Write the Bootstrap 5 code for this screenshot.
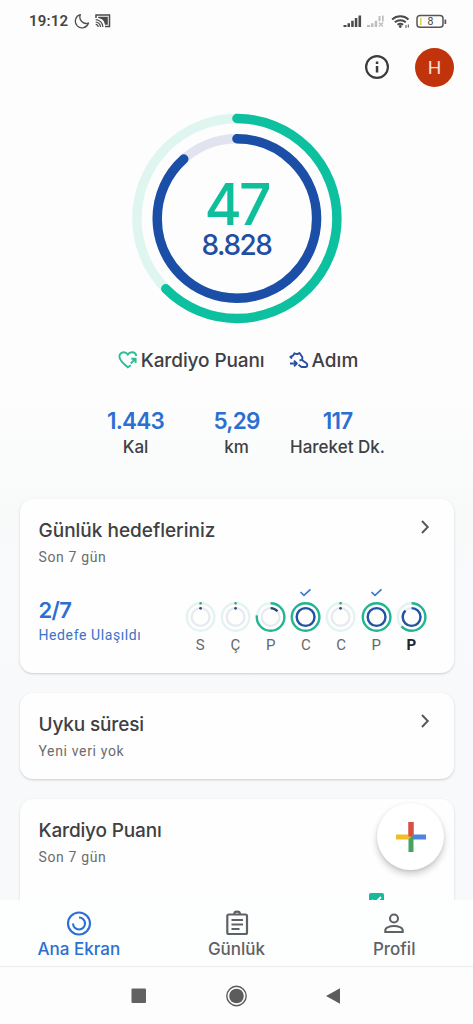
<!DOCTYPE html>
<html lang="tr">
<head>
<meta charset="utf-8">
<meta name="viewport" content="width=device-width, initial-scale=1">
<title>Ana Ekran</title>
<link href="https://cdn.jsdelivr.net/npm/bootstrap@5.3.0/dist/css/bootstrap.min.css" rel="stylesheet">
<style>
body{width:473px;height:1024px;overflow:hidden;font-family:Inter,Roboto,sans-serif;color:#3f4043;background:#fdfdfd}
svg{display:block;flex:none}
.screen{height:1024px}
.feed{height:900px;overflow:hidden;background:linear-gradient(#fdfdfd 0,#fdfdfd 400px,#f8fafa 510px,#f8f9fb 700px)}
.statusbar{height:42px;padding:0 26px 0 29px;color:#444}
.clock{font:600 15px/42px Roboto,sans-serif;letter-spacing:.2px;width:40px}
.moon{margin-left:5px}.cast{margin-left:5px}
.topbar{height:50px;padding-right:19px;gap:25px}
.avatar{width:39px;height:39px;background:#c1330b;color:#f7dfd6;font:400 19px/39px Roboto,sans-serif}
.rings{height:211px;margin-top:21px}
.rings .score{top:67px;font-size:57px;line-height:50px;font-weight:500;letter-spacing:-3px;color:#0fbf9c}
.rings .steps{top:116px;font-size:28px;line-height:32px;font-weight:500;letter-spacing:-1.5px;color:#1f4ea3}
.legend{height:28px;margin-top:23px;font-size:19px;line-height:28px;font-weight:500;padding-left:3px}
.legend svg{margin-bottom:3px}
.kp{margin:0 24px 0 3px;letter-spacing:-.1px}.ad{margin-left:3px}
.stats{width:303px;margin-top:31px}
.stats b{display:block;font-weight:600;font-size:22.5px;line-height:29px;color:#2b6fd3;letter-spacing:-.8px}
.stats span{display:block;font-weight:500;font-size:17px;line-height:24px;white-space:nowrap}
.tile{margin:0 19.5px 20px;padding:0 19px;border:0;border-radius:13px;background:#fefefe;box-shadow:0 1px 2px rgba(60,70,75,.2),0 1px 4px rgba(60,70,75,.04)}
.tile h2{font-size:19px;line-height:26px;font-weight:500;margin:19px 0 0;color:#3f4043}
.t2 h2,.t3 h2{letter-spacing:-.15px}
.sub-text{font:400 14px/18px Roboto,sans-serif;letter-spacing:.65px;color:#6b6c6f;margin-top:4px}
.chev{margin:20px 4px 0 0}
.total{font-size:22px;line-height:26px;font-weight:600;color:#2b6fd3;letter-spacing:-.6px}
.reached{font:400 14px/20px Roboto,sans-serif;letter-spacing:.6px;color:#3973c9;margin-top:2px}
.day{width:35.2px;font:400 15px/18px Roboto,sans-serif;color:#66676a}
.t1{height:174px;margin-top:40px}.t2{height:86px}.t3{height:160px}
.week{margin-top:17px}
.tally{padding-top:14px}
#days{margin-right:5.5px}
.goal{position:absolute;left:349px;top:94px}
.fab{right:29px;top:803px;width:67px;height:67px;background:#fff;box-shadow:0 4px 7px rgba(0,0,0,.2),0 1px 3px rgba(0,0,0,.08)}
.tabs{height:67px;background:#fdfefe;border-bottom:1px solid #ececee;font-size:17px;font-weight:500;color:#606164}
.tabs .tab{width:157.7px;padding-top:9px}
.tabs .tab span{line-height:24px}
.tabs .on{color:#2b6fd3}
.keys{height:57px;background:#fdfdfd}
</style>
</head>
<body>
<div class="screen d-flex flex-column position-relative">
  <main class="feed">
    <div class="statusbar d-flex align-items-center">
      <span class="clock">19:12</span>
      <svg class="moon" width="16" height="16" viewBox="0 0 16 16" fill="none" stroke="#505050" stroke-width="1.300" stroke-linejoin="round"><path d="M6.300 1.700A6.700 6.700 0 1 0 14.500 10 6.400 6.400 0 0 1 6.300 1.700z"/></svg>
      <svg class="cast" width="16" height="14" viewBox="0 0 16 14" fill="none" stroke="#4a4a4a"><path d="M1 4V1h13.500v11.500H10" stroke-width="1.500"/><path d="M3.200 2.800H12.800V10.800H10A8 8 0 0 0 3.200 4z" fill="#4a4a4a" stroke="none"/><path d="M.7 5.600a7.500 7.500 0 0 1 7.200 7.500M.7 8a5 5 0 0 1 4.800 5.100M.7 10.400a2.600 2.600 0 0 1 2.500 2.700" stroke-width="1.200"/></svg>
      <div class="ms-auto">
        <svg width="106" height="20" viewBox="-1.500 0 106 20">
          <g fill="#4a4a4a"><path d="M1 14h3v2H1zM5 12.300h2.500V16H5zM8.700 9.700h2.500V16H8.700zM12.300 7h2.500v9h-2.500zM16 4.500h2.600V16H16z"/></g>
          <g fill="#bebebe"><path d="M24.500 14h3v2h-3zM28.500 12.300H31V16h-2.500zM32.200 9.700h2.500V16h-2.500zM36 5h2v5h-2zM39.500 4.500h1.700v6h-1.700z"/><path d="M36.500 11.500l4 4M40.500 11.500l-4 4" stroke="#bebebe" stroke-width="1.400"/></g>
          <g fill="none" stroke="#4a4a4a" stroke-width="1.900"><path d="M49.600 8.500a12 12 0 0 1 16.400 0M52.300 11.300a8.200 8.200 0 0 1 11 0M55 13.800a4.400 4.400 0 0 1 5.600 0"/><path d="M63.500 14v3M65.800 13.500v3" stroke-width="1"/></g><circle cx="57.800" cy="15.500" r="1.400" fill="#4a4a4a"/>
          <rect x="74.500" y="4.500" width="26" height="11.800" rx="3" fill="none" stroke="#555" stroke-width="1.500"/><path d="M77.500 6.800h1.600v7.300h-1.600z" fill="#e3d456"/><path d="M102 8.500h1.700v4.500H102z" fill="#555"/>
          <text x="88" y="14.300" text-anchor="middle" font-family="Roboto" font-size="10.500" fill="#444">8</text>
        </svg>
      </div>
    </div>
    <div class="topbar d-flex align-items-center justify-content-end">
      <svg width="26" height="26" viewBox="0 0 26 26"><circle cx="13" cy="13" r="10.900" fill="none" stroke="#3c3c3f" stroke-width="2.200"/><path d="M11.800 12h2.500v6.500h-2.500zM11.800 7.500h2.500V10h-2.500z" fill="#3c3c3f"/></svg>
      <div class="avatar rounded-circle text-center">H</div>
    </div>
    <div class="rings position-relative text-center">
      <svg class="mx-auto" width="211" height="211" viewBox="0 0 211 211" fill="none" stroke-width="9.400">
        <circle cx="105.900" cy="105.500" r="100" stroke="#dff5f0"/><circle cx="105.900" cy="105.500" r="79.700" stroke="#e1e4ee"/>
        <g stroke-linecap="round" transform="rotate(-90 105.900 105.500)"><circle cx="105.900" cy="105.500" r="100" stroke="#0dc1a0" pathLength="100" stroke-dasharray="62.600 100"/><circle cx="105.900" cy="105.500" r="79.700" stroke="#1b4ea6" pathLength="100" stroke-dasharray="88.400 100"/></g>
      </svg>
      <div class="score position-absolute start-0 end-0">47</div>
      <div class="steps position-absolute start-0 end-0">8.828</div>
    </div>
    <div class="legend d-flex justify-content-center align-items-center">
      <svg width="20" height="19" viewBox="0 0 20 19" fill="none" stroke="#2bbd93" stroke-width="1.900"><path d="M12.800 15.300L9.800 17.300C4.500 13 1.400 10 1.400 6.500A4.300 4.300 0 0 1 5.700 2.200c1.700 0 3.200.8 4.100 2.200A4.800 4.800 0 0 1 13.900 2.200c2.300 0 4.100 1.500 4.300 3.800"/><path d="M12.800 13.500l4.300-4.300M13.300 8.700h4.300v4.300"/></svg>
      <span class="kp">Kardiyo Puanı</span>
      <svg width="20" height="18" viewBox="0 0 20 18" fill="none" stroke="#274f9f" stroke-width="1.900" stroke-linejoin="round"><path d="M3 7.500L1.400 5.800 4.300 4.300 5.500 2.200C7.500 3.400 9 3.200 10.500 2l2.800 4v3.200l4.200 3c1.400 1.200.9 3.800-.8 3.800H12.500L9.500 13.700"/><path d="M1 12.500h6.300M5 9.700l2.800 2.800L5 15.300M10.500 9.700l2.300-1"/></svg>
      <span class="ad">Adım</span>
    </div>
    <div class="stats row g-0 mx-auto text-center">
      <div class="col"><b>1.443</b><span>Kal</span></div>
      <div class="col"><b>5,29</b><span>km</span></div>
      <div class="col"><b>117</b><span>Hareket Dk.</span></div>
    </div>
    <section class="tile card t1">
      <div class="d-flex justify-content-between"><div><h2>Günlük hedefleriniz</h2><div class="sub-text">Son 7 gün</div></div>
        <svg class="chev" width="12" height="16" viewBox="0 0 12 16" fill="none" stroke="#55565a" stroke-width="1.900"><path d="M3 2l5.800 6L3 14"/></svg></div>
      <div class="d-flex justify-content-between week">
        <div class="tally"><div class="total">2/7</div><div class="reached">Hedefe Ulaşıldı</div></div>
        <div class="d-flex text-center" id="days"></div>
      </div>
    </section>
    <section class="tile card t2">
      <div class="d-flex justify-content-between"><div><h2>Uyku süresi</h2><div class="sub-text">Yeni veri yok</div></div>
        <svg class="chev" width="12" height="16" viewBox="0 0 12 16" fill="none" stroke="#55565a" stroke-width="1.900"><path d="M3 2l5.800 6L3 14"/></svg></div>
    </section>
    <section class="tile card t3">
      <h2>Kardiyo Puanı</h2><div class="sub-text">Son 7 gün</div>
      <svg class="goal" width="15" height="15" viewBox="0 0 15 15"><rect width="15" height="15" rx="2" fill="#17b99b"/><path d="M3 7l3 3 6-6" fill="none" stroke="#fff" stroke-width="1.800"/></svg>
    </section>
  </main>
  <div class="fab rounded-circle position-absolute d-flex align-items-center justify-content-center">
    <svg width="30" height="30" viewBox="0 0 30 30"><path d="M12.500 0h5v15h-5z" fill="#d94f43"/><path d="M0 12.500h12.500L17.500 17.500H0z" fill="#f1bd27"/><path d="M15 12.500h15v5H15z" fill="#4d83e2"/><path d="M12.500 17.500l5-5V30h-5z" fill="#43a561"/><path d="M12.500 0h5v12.500l-5 2.500z" fill="#d94f43"/></svg>
  </div>
  <nav class="tabs d-flex">
    <div class="tab on d-flex flex-column align-items-center">
      <svg width="28" height="28" viewBox="0 0 28 28" fill="none" stroke="currentColor" stroke-width="2.100"><circle cx="14" cy="14.500" r="11"/><path d="M14 8.500a6 6 0 1 1-6 6"/></svg><span>Ana Ekran</span></div>
    <div class="tab d-flex flex-column align-items-center">
      <svg width="28" height="28" viewBox="0 0 28 28" fill="none" stroke="currentColor" stroke-width="2.200"><rect x="4.300" y="5.500" width="19.700" height="19.500" rx="1.500"/><path d="M11.300 5a2.800 2.300 0 0 1 5.600 0M8.500 11h11.500M8.500 15.500h11.500M8.500 20h8"/></svg><span>Günlük</span></div>
    <div class="tab d-flex flex-column align-items-center">
      <svg width="28" height="28" viewBox="0 0 28 28" fill="none" stroke="currentColor" stroke-width="2.100"><circle cx="14" cy="9.500" r="4"/><path d="M5.300 23v-1.500c0-3 4.500-4.500 8.700-4.500s8.700 1.500 8.700 4.500V23z"/></svg><span>Profil</span></div>
  </nav>
  <div class="keys d-flex justify-content-center align-items-center">
    <svg width="220" height="24" viewBox="0 0 220 24"><rect x="4.500" y="4.500" width="14.500" height="14.500" rx="1" fill="#626262"/><circle cx="109.500" cy="12" r="9.700" fill="none" stroke="#5c5c5c" stroke-width="1.400"/><circle cx="109.500" cy="12" r="7.300" fill="#5c5c5c"/><path d="M199 12L213 4.200v15.600z" fill="#5c5c5c"/></svg>
  </div>
</div>
<script>
// label, outer progress, inner progress (percent), goal reached
const days=[['S',1,1],['Ç',1,1],['P',77,14],['C',100,100,1],['C',1,1],['P',100,100,1],['P',63,88]];
document.getElementById('days').innerHTML=days.map(([l,o,i,ok],n)=>{
 const arc=(r,c,v)=>`<circle cx="17.600" cy="34" r="${r}" stroke="${c}" pathLength="100" stroke-dasharray="${v} 100" transform="rotate(-90 17.600 34)"/>`;
 const small=o==1;
 return `<div class="day"><svg width="35.200" height="53" viewBox="0 0 35.200 53" fill="none" stroke-width="2.400">
 <circle cx="17.600" cy="34" r="13.800" stroke="#e3f4f0"/><circle cx="17.600" cy="34" r="8.900" stroke="#e6e9ef" stroke-width="2.200"/>
 ${small?'<circle cx="17.600" cy="20.200" r="1.300" fill="#3aa086" stroke="none"/><circle cx="17.600" cy="25.300" r="1.400" fill="#36496d" stroke="none"/>':arc(13.8,'#22b591',o)+arc(8.9,i<20?'#34466c':'#2353a2',i)}
 ${ok?'<path d="M12.500 9l3.500 3.300 6.500-6" stroke="#3d78ce" stroke-width="1.700"/>':''}</svg><div class="${n==6?'fw-bold text-dark':''}">${l}</div></div>`}).join('');
</script>
<script src="https://cdn.jsdelivr.net/npm/bootstrap@5.3.0/dist/js/bootstrap.bundle.min.js"></script>
</body>
</html>
